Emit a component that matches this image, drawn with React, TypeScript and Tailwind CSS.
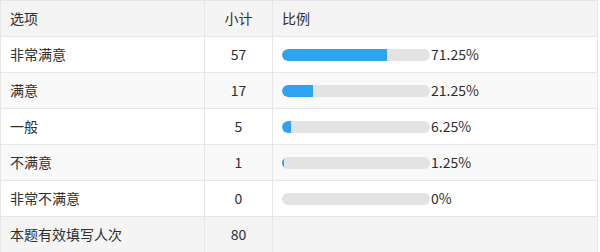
import React from 'react';

const rows = [
  { label: '非常满意', count: 57, pct: 71.25 },
  { label: '满意', count: 17, pct: 21.25 },
  { label: '一般', count: 5, pct: 6.25 },
  { label: '不满意', count: 1, pct: 1.25 },
  { label: '非常不满意', count: 0, pct: 0 },
];

function fmt(p: number) {
  return p === 0 ? '0%' : `${p.toFixed(2)}%`;
}

export default function App() {
  return (
    <div
      className="w-[600px] h-[252px] bg-white text-[14px] text-[#2e2e2e]"
      style={{ fontFamily: '"Noto Sans CJK SC", "Noto Sans", sans-serif' }}
    >
      <div className="w-[598px] border border-[#e6e6e6]">
        {/* En-tête */}
        <div className="grid grid-cols-[204px_68px_1fr] h-[36px] bg-[#f4f4f4] border-b border-[#e6e6e6]">
          <div className="flex items-center pl-[9px] border-r border-[#e6e6e6]">选项</div>
          <div className="flex items-center justify-center border-r border-[#e6e6e6]">小计</div>
          <div className="flex items-center pl-[9px]">比例</div>
        </div>

        {rows.map((r, i) => (
          <div
            key={r.label}
            className={`grid grid-cols-[204px_68px_1fr] h-[36px] border-b border-[#e6e6e6] ${
              i % 2 === 1 ? 'bg-[#f9f9f9]' : 'bg-white'
            }`}
          >
            <div className="flex items-center pl-[9px] border-r border-[#e6e6e6]">{r.label}</div>
            <div className="flex items-center justify-center border-r border-[#e6e6e6]">{r.count}</div>
            <div className="flex items-center pl-[9px]">
              <div className="w-[148px] h-[12px] rounded-full bg-[#e3e3e4] overflow-hidden">
                <div className="h-full rounded-l-full bg-[#2ea3f2]" style={{ width: `${r.pct}%` }} />
              </div>
              <span className="ml-px">{fmt(r.pct)}</span>
            </div>
          </div>
        ))}

        {/* Total */}
        <div className="grid grid-cols-[204px_68px_1fr] h-[35px] bg-[#f4f4f4]">
          <div className="flex items-center pl-[9px] border-r border-[#e6e6e6]">本题有效填写人次</div>
          <div className="flex items-center justify-center border-r border-[#e6e6e6]">80</div>
          <div />
        </div>
      </div>
    </div>
  );
}
